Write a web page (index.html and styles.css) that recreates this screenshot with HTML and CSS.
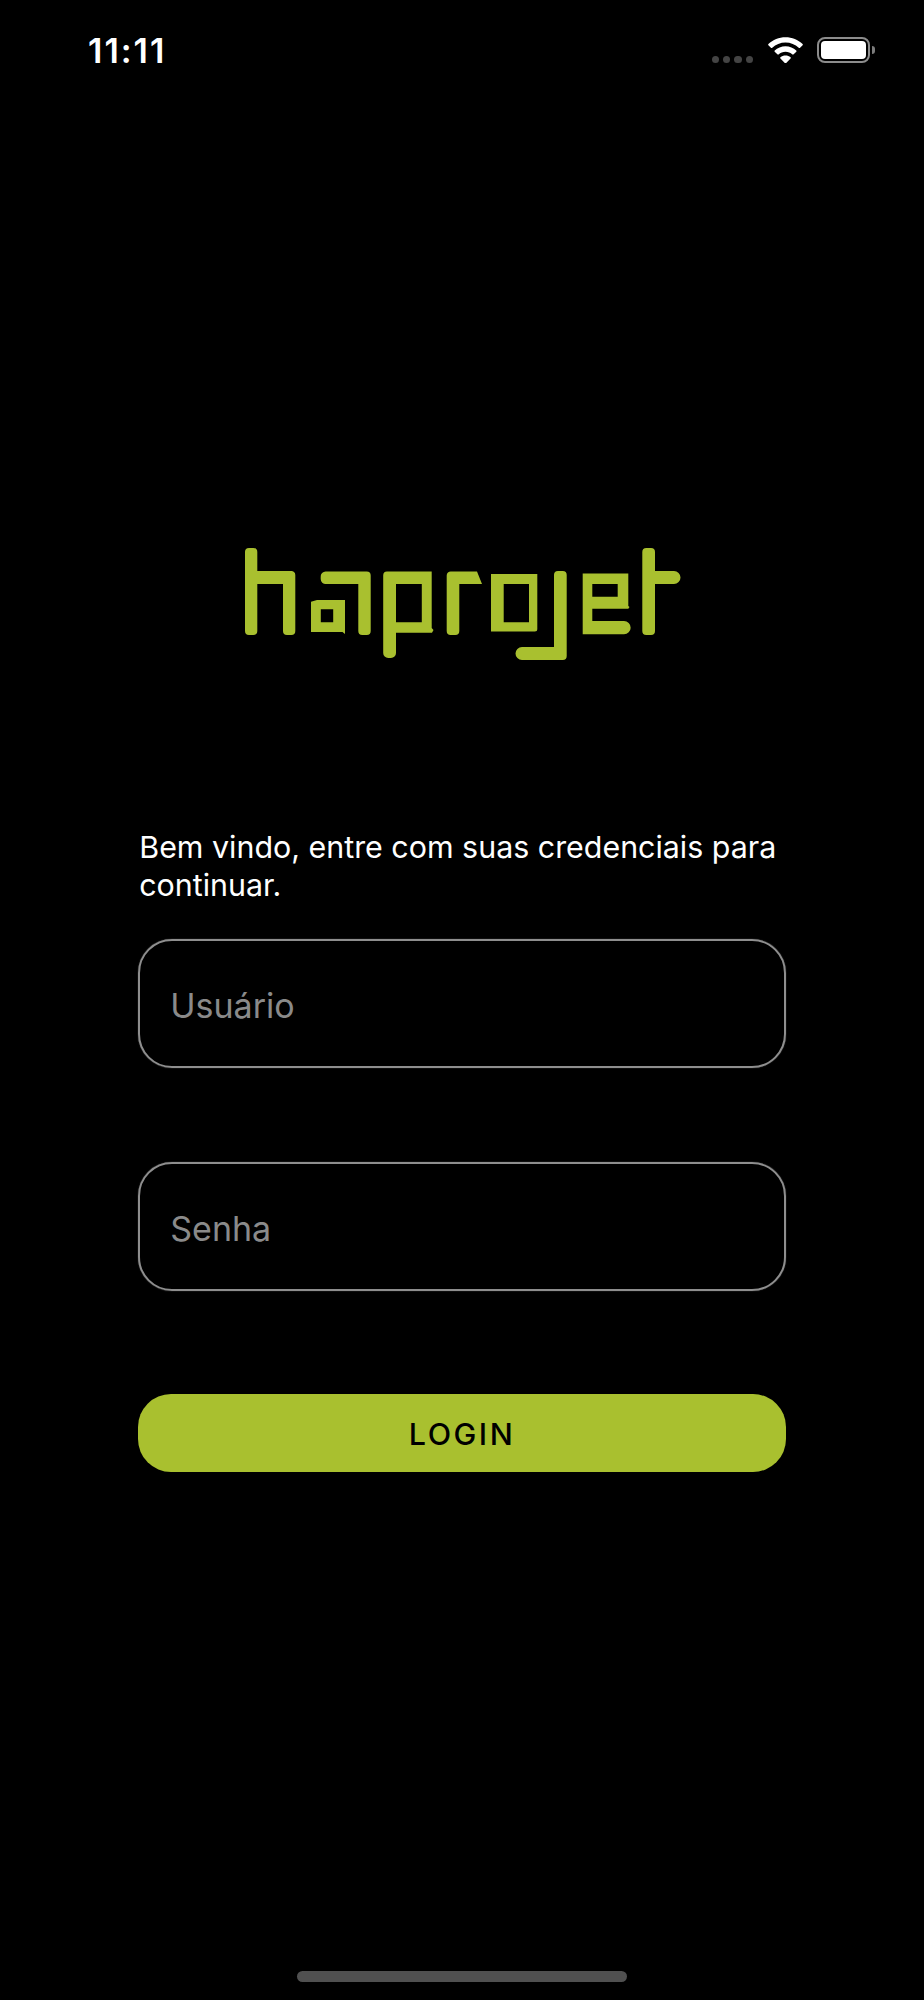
FILE: index.html
```html
<!DOCTYPE html>
<html lang="pt-BR">
<head>
<meta charset="utf-8">
<title>haprojet</title>
<link rel="stylesheet" href="styles.css">
</head>
<body>
<main class="screen">
  <header class="status">
    <span class="time">11:11</span>
    <div class="status-icons">
      <div class="signal"><i></i><i></i><i></i><i></i></div>
      <svg class="wifi" viewBox="0 0 36 27" aria-hidden="true">
        <path d="M18 0C11.2 0 5.1 2.6.4 6.9c-.4.4-.4.9 0 1.3l2.6 2.7c.4.4 1 .4 1.4 0C8 7.5 12.8 5.4 18 5.4s10 2.1 13.6 5.5c.4.4 1 .4 1.4 0l2.6-2.7c.4-.4.4-.9 0-1.3C30.900 2.600 24.800 0 18 0Z"/>
        <path d="M18 9.300c-4.300 0-8.200 1.700-11.100 4.300-.4.4-.4.9 0 1.300l2.700 2.700c.4.4.9.4 1.300.1 1.900-1.600 4.400-2.600 7.100-2.600s5.200 1 7.100 2.600c.4.3.9.3 1.300-.1l2.700-2.700c.4-.4.4-.9 0-1.300-2.900-2.600-6.800-4.300-11.100-4.300Z"/>
        <path d="M18 18.800c-2 0-3.800.7-5.200 1.900-.4.4-.4.900 0 1.300l4.500 4.600c.4.400 1 .4 1.400 0l4.500-4.600c.4-.4.4-.9 0-1.300-1.400-1.200-3.200-1.900-5.200-1.900Z"/>
      </svg>
      <div class="battery"><div class="battery-fill"></div></div>
    </div>
  </header>

  <svg class="logo" viewBox="240 545 445 117" role="img" aria-label="haprojet">
    <g class="logo-shape">
      <path d="M245 552a4 4 0 0 1 4-4h4.300a4 4 0 0 1 4 4V571H291a4 4 0 0 1 4.300 4V631a4 4 0 0 1-4 4h-4.300a4 4 0 0 1-4-4V584H257.300V631a4 4 0 0 1-4 4H249a4 4 0 0 1-4-4Z"/>
      <path d="M326 571.500H366.700a4 4 0 0 1 4 4V631a4 4 0 0 1-4 4h-4.400a4 4 0 0 1-4-4V584H326a5 5 0 0 1-5.300-5V577a5 5 0 0 1 5.300-5.500Z"/>
      <path fill-rule="evenodd" d="M311 601.700L317 600H345V634L342.500 632H311ZM320.800 609.300V622.300H333.200V609.300Z"/>
      <path fill-rule="evenodd" d="M387 571.500H431.700V628L433.500 630L432 632.800H396V653a5 5 0 0 1-5 5H388.200a5 5 0 0 1-5-5V575.500a4 4 0 0 1 3.800-4ZM396 584V622.300H421.800V584Z"/>
      <path d="M451 571.500H477L482 584H459.300V631a4 4 0 0 1-4 4H450.700a4 4 0 0 1-4-4V575.500a4 4 0 0 1 4.300-4Z"/>
      <path fill-rule="evenodd" d="M491 574H537.300V629a2.500 2.500 0 0 1-2.500 2.500H491ZM503.700 584V622.300H529V584Z"/>
      <path d="M554 575a4 4 0 0 1 4-4h4.700a4 4 0 0 1 4 4V656a4 4 0 0 1-4 4H522a6.500 6.500 0 0 1 0-13H554Z"/>
      <path fill-rule="evenodd" d="M582.700 573.500H628.300V606L629.500 607L628.300 608.700H592.300V621H624a6.600 6.600 0 0 1 0 13.300H582.700ZM592.300 584V596.800H617.700V584Z"/>
      <path d="M642.300 552a4 4 0 0 1 4-4h4.700a4 4 0 0 1 4 4V571H674a6.500 6.500 0 0 1 0 13H655V631a4 4 0 0 1-4 4h-4.700a4 4 0 0 1-4-4Z"/>
    </g>
  </svg>

  <form class="login">
    <p class="welcome">Bem vindo, entre com suas credenciais para continuar.</p>
    <label class="field"><input class="input" type="text" placeholder="Usuário"></label>
    <label class="field"><input class="input" type="password" placeholder="Senha"></label>
    <button class="btn" type="button">LOGIN</button>
  </form>

  <div class="home-indicator"></div>
</main>
</body>
</html>
```

FILE: styles.css
```css
* {
  box-sizing: border-box;
}

html,
body {
  margin: 0;
  background: #000;
}

.screen {
  width: 924px;
  height: 2000px;
  background: #000;
  color: #fff;
  font-family: Inter, "Liberation Sans", sans-serif;
  display: flex;
  flex-direction: column;
  align-items: center;
}

.status {
  width: 100%;
  height: 100px;
  padding: 31px 54px 0 88px;
  display: flex;
  justify-content: space-between;
  align-items: flex-start;
}

.time {
  font-size: 34px;
  line-height: 40px;
  font-weight: 600;
  letter-spacing: 2px;
}

.status-icons {
  display: flex;
  align-items: flex-start;
  padding-top: 5.700px;
}

.signal {
  display: flex;
  gap: 3.800px;
  margin: 19px 15px 0 0;
}

.signal i {
  width: 7.500px;
  height: 7.500px;
  border-radius: 50%;
  background: #444;
}

.wifi {
  width: 35px;
  height: 26.600px;
  fill: #fff;
  margin-right: 14px;
}

.battery {
  position: relative;
  width: 53px;
  height: 26.600px;
  border: 2px solid #8c8c8c;
  border-radius: 8px;
  padding: 2px;
}

.battery::after {
  content: "";
  position: absolute;
  right: -7px;
  top: 7px;
  width: 3px;
  height: 8px;
  background: #7c7c7c;
  border-radius: 0 3px 3px 0;
}

.battery-fill {
  width: 100%;
  height: 100%;
  background: #fff;
  border-radius: 4px;
}

.logo {
  width: 445px;
  height: 117px;
  margin-top: 445px;
  flex: none;
}

.logo-shape {
  fill: #a9c02f;
}

.login {
  width: 647.500px;
  margin-top: 167px;
  display: flex;
  flex-direction: column;
}

.welcome {
  margin: 0 0 34.500px;
  padding-left: 1px;
  font-size: 30.400px;
  line-height: 37.500px;
  color: #fff;
}

.field {
  display: block;
  margin-bottom: 94.500px;
}

.field + .field {
  margin-bottom: 103px;
}

.input {
  display: block;
  width: 100%;
  height: 129px;
  padding: 4px 30px 0;
  background: transparent;
  border: 2px solid #8e8e8e;
  border-radius: 34px;
  box-shadow: 0 0 1px #8a8a8a;
  color: #fff;
  font-family: inherit;
  font-size: 34px;
  outline: none;
}

.input::placeholder {
  color: #8a8a8a;
  opacity: 1;
}

.btn {
  height: 78px;
  border: 0;
  border-radius: 33px;
  background: #a9c02f;
  color: #000;
  font-family: inherit;
  font-size: 30.500px;
  font-weight: 500;
  letter-spacing: 2.500px;
}

.home-indicator {
  margin-top: auto;
  margin-bottom: 18px;
  width: 330px;
  height: 11px;
  border-radius: 5.500px;
  background: #505050;
}
```
